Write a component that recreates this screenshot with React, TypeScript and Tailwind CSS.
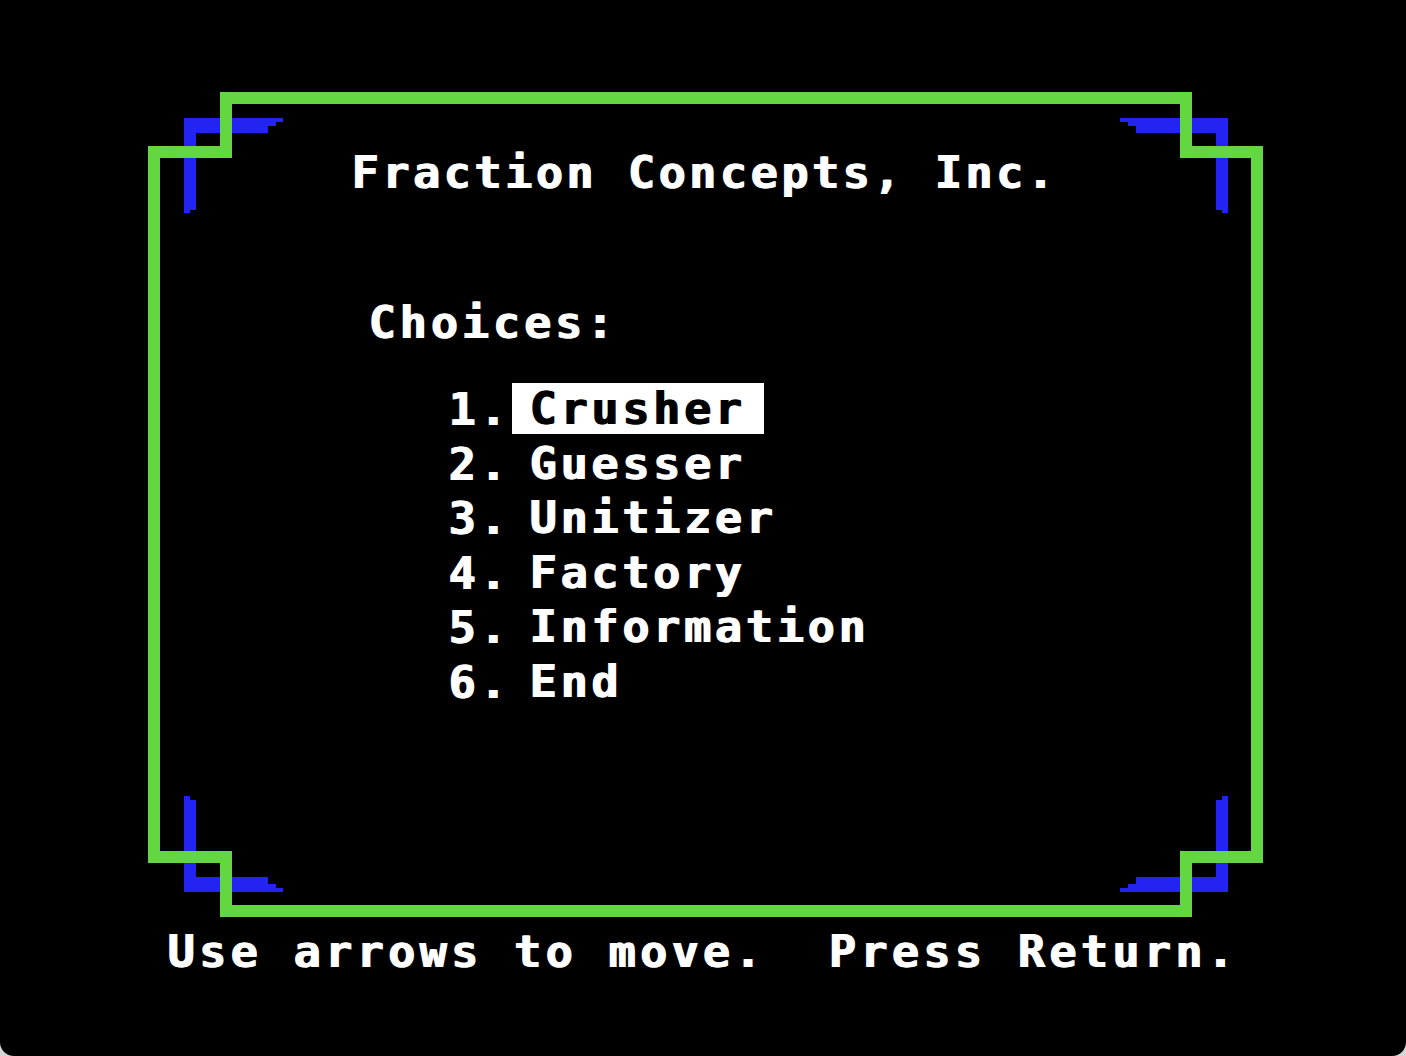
import React from "react";

const GREEN = "#62d741";
const BLUE = "#2323f2";

const choices = ["Crusher", "Guesser", "Unitizer", "Factory", "Information", "End"];

function Frame() {
  // green outline path, drawn at its centre line
  const green =
    "M226 98 H1186 V152 H1257 V857 H1186 V911 H226 V857 H154 V152 H226 Z";

  return (
    <svg
      className="pointer-events-none absolute inset-0"
      width="1406"
      height="1056"
      viewBox="0 0 1406 1056"
      shapeRendering="crispEdges"
    >
      <g fill={BLUE}>
        <polygon points="184,118 283,118 283,122 276,122 276,126 268,126 268,133 196,133 196,210 190,210 190,213 184,213" />
        <polygon points="1228,118 1120,118 1120,122 1128,122 1128,126 1136,126 1136,133 1216,133 1216,210 1222,210 1222,213 1228,213" />
        <polygon points="184,892 283,892 283,888 276,888 276,884 268,884 268,877 196,877 196,800 190,800 190,796 184,796" />
        <polygon points="1228,892 1120,892 1120,888 1128,888 1128,884 1136,884 1136,877 1216,877 1216,800 1222,800 1222,796 1228,796" />
      </g>
      <path d={green} fill="none" stroke={GREEN} strokeWidth="12" strokeLinejoin="miter" />
    </svg>
  );
}

export default function App() {
  return (
    <div className="h-[1056px] w-[1406px] bg-[#d6d6d6]">
      <div
        className="relative h-full w-full overflow-hidden rounded-b-[14px] bg-black text-white"
        style={{ fontFamily: '"DejaVu Sans Mono", "Liberation Mono", monospace' }}
      >
        <Frame />
        <div className="relative flex flex-col pt-[145px] text-[45px] font-bold [text-shadow:1.5px_0_0_currentColor]">
          <p className="h-[55px] pl-[351px] leading-[55px] tracking-[3.6px]">Fraction Concepts, Inc.</p>

          <p className="mt-[95px] h-[55px] pl-[368px] leading-[55px] tracking-[4px]">Choices:</p>

          <ul className="mt-[32px] flex flex-col">
            {choices.map((c, i) => (
              <li key={c} className="flex h-[54.6px] pl-[448px]">
                <span className="w-[64px] leading-[55px] tracking-[4px]">{i + 1}.</span>
                <span
                  className={
                    "mt-px h-[51px] w-[252px] pl-[17px] leading-[51px] tracking-[3.8px] " +
                    (i === 0 ? "bg-white text-black" : "")
                  }
                >
                  {c}
                </span>
              </li>
            ))}
          </ul>

          <p className="mt-[214px] h-[55px] whitespace-pre pl-[167px] leading-[55px] tracking-[4.4px]">
            {"Use arrows to move.  Press Return."}
          </p>
        </div>
      </div>
    </div>
  );
}
